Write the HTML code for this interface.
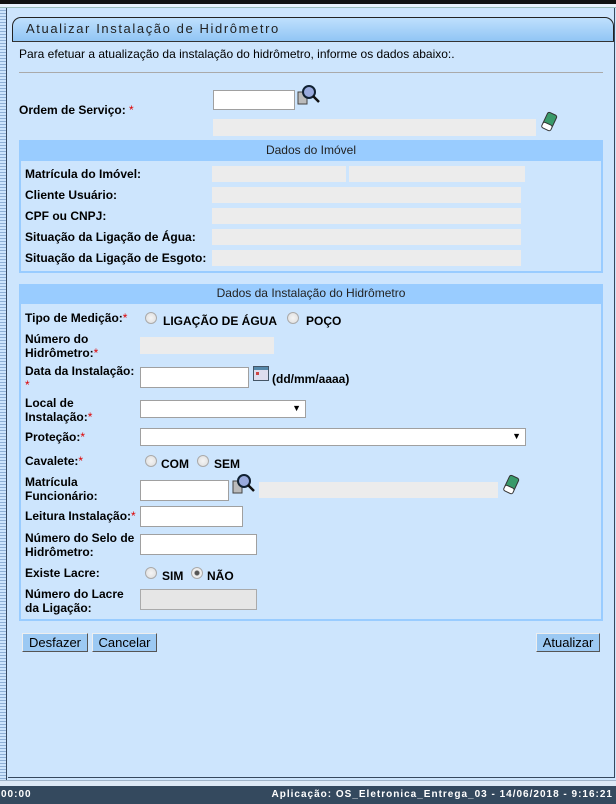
<!DOCTYPE html>
<html><head><meta charset="utf-8"><style>
*{margin:0;padding:0;box-sizing:border-box}
body{width:616px;height:804px;overflow:hidden;background:#cde5fd;font-family:"Liberation Sans",Arial,sans-serif;position:relative;font-size:12px;color:#000}
.a{position:absolute}
.lb{font-weight:bold;font-size:12px;line-height:14px}
.r{color:#d00;font-weight:normal}
.in{position:absolute;background:#fff;border:1px solid #a0a0a0}
.ro{position:absolute;background:#ececec}
.rad{position:absolute;width:12px;height:12px;border-radius:50%;border:1px solid #aaa;background:radial-gradient(circle,#f4f4f4,#ddd)}
.btn{position:absolute;height:19px;background:#9cc9f3;border:1px solid #555;border-top-color:#eee;border-left-color:#eee;font-size:13px;line-height:17px;text-align:center}
.sel{position:absolute;background:#fff;border:1px solid #a0a0a0;height:18px}
.sel:after{content:"▼";position:absolute;right:4px;top:2px;font-size:9px}
.hdr{position:absolute;background:#99ccff;text-align:center;font-size:12px;line-height:19px;color:#222}
</style></head><body>
<div class="a" style="left:0;top:0;width:616px;height:4px;background:#111"></div>
<div class="a" style="left:0;top:4px;width:616px;height:3px;background:#e8f2fc"></div>
<div class="a" style="left:0;top:7px;width:616px;height:1px;background:#9bb"></div>
<div class="a" style="left:0;top:8px;width:7px;height:772px;background:repeating-linear-gradient(#cde5fd 0 2px,#8fb0d6 2px 3px);border-right:1px solid #36485e"></div>
<div class="a" style="left:8px;top:8px;width:607px;height:770px;border-right:1px solid #36485e;border-bottom:1px solid #36485e"></div>
<div class="a" style="left:12px;top:17px;width:602px;height:25px;background:linear-gradient(#bfe0fd,#8fc4f4);border:1px solid #222;border-bottom:none;border-radius:9px 9px 0 0"></div>
<div class="a" style="left:12px;top:41px;width:602px;height:1px;background:#333"></div>
<div class="a" style="left:26px;top:21px;font-size:13px;letter-spacing:1.6px;color:#222">Atualizar Instalação de Hidrômetro</div>
<div class="a" style="left:19px;top:47px;font-size:12px">Para efetuar a atualização da instalação do hidrômetro, informe os dados abaixo:.</div>
<div class="a" style="left:19px;top:72px;width:584px;height:1px;background:#aaa"></div>
<div class="a lb" style="left:19px;top:103px;font-weight:bold;font-size:12px">Ordem de Serviço: <span class="r">*</span></div>
<div class="in" style="left:213px;top:90px;width:82px;height:20px"></div>
<svg class="a" style="left:296px;top:84px" width="26" height="24"><rect x="2" y="8" width="9" height="12" fill="#bbb" stroke="#444"/><circle cx="13" cy="8" r="6" fill="#9ad" stroke="#123" stroke-width="2"/><line x1="17" y1="12" x2="23" y2="18" stroke="#111" stroke-width="2.5"/></svg>
<div class="ro" style="left:213px;top:119px;width:323px;height:17px"></div>
<svg class="a" style="left:540px;top:111px" width="18" height="22"><g transform="rotate(25 9 11)"><rect x="4" y="2" width="10" height="14" rx="2" fill="#3a9a6a" stroke="#333"/><rect x="4" y="13" width="10" height="6" rx="2" fill="#fff" stroke="#333"/></g></svg>

<div class="a" style="left:19px;top:140px;width:584px;height:133px;background:#99ccff"></div>
<div class="hdr" style="left:19px;top:141px;width:584px">Dados do Imóvel</div>
<div class="a" style="left:21px;top:161px;width:580px;height:110px;background:#cde5fd"></div>
<div class="a lb" style="left:25px;top:167px">Matrícula do Imóvel:</div>
<div class="ro" style="left:212px;top:166px;width:134px;height:16px"></div>
<div class="ro" style="left:349px;top:166px;width:176px;height:16px"></div>
<div class="a lb" style="left:25px;top:188px">Cliente Usuário:</div>
<div class="ro" style="left:212px;top:187px;width:309px;height:16px"></div>
<div class="a lb" style="left:25px;top:209px">CPF ou CNPJ:</div>
<div class="ro" style="left:212px;top:208px;width:309px;height:16px"></div>
<div class="a lb" style="left:25px;top:230px">Situação da Ligação de Água:</div>
<div class="ro" style="left:212px;top:229px;width:309px;height:16px"></div>
<div class="a lb" style="left:25px;top:251px">Situação da Ligação de Esgoto:</div>
<div class="ro" style="left:212px;top:250px;width:309px;height:16px"></div>

<div class="a" style="left:19px;top:284px;width:584px;height:337px;background:#99ccff"></div>
<div class="hdr" style="left:19px;top:284px;width:584px">Dados da Instalação do Hidrômetro</div>
<div class="a" style="left:21px;top:304px;width:580px;height:315px;background:#cde5fd"></div>
<div class="a lb" style="left:25px;top:311px">Tipo de Medição:<span class="r">*</span></div>
<div class="rad" style="left:145px;top:312px"></div>
<div class="a lb" style="left:163px;top:314px;font-size:12px">LIGAÇÃO DE ÁGUA</div>
<div class="rad" style="left:287px;top:312px"></div>
<div class="a lb" style="left:306px;top:314px;font-size:12px">POÇO</div>
<div class="a lb" style="left:25px;top:332px">Número do<br>Hidrômetro:<span class="r">*</span></div>
<div class="ro" style="left:140px;top:337px;width:134px;height:17px"></div>
<div class="a lb" style="left:25px;top:364px">Data da Instalação:<br><span class="r">*</span></div>
<div class="in" style="left:140px;top:367px;width:109px;height:21px"></div>
<svg class="a" style="left:253px;top:366px" width="16" height="15"><rect x="0.5" y="0.5" width="15" height="14" fill="#dde" stroke="#456"/><rect x="1" y="1" width="14" height="3" fill="#58a"/><rect x="3" y="6" width="3" height="3" fill="#c44"/></svg>
<div class="a lb" style="left:272px;top:372px">(dd/mm/aaaa)</div>
<div class="a lb" style="left:25px;top:396px">Local de<br>Instalação:<span class="r">*</span></div>
<div class="sel" style="left:140px;top:400px;width:166px"></div>
<div class="a lb" style="left:25px;top:430px">Proteção:<span class="r">*</span></div>
<div class="sel" style="left:140px;top:428px;width:386px"></div>
<div class="a lb" style="left:25px;top:454px">Cavalete:<span class="r">*</span></div>
<div class="rad" style="left:145px;top:455px"></div>
<div class="a lb" style="left:161px;top:457px">COM</div>
<div class="rad" style="left:197px;top:455px"></div>
<div class="a lb" style="left:214px;top:457px">SEM</div>
<div class="a lb" style="left:25px;top:475px">Matrícula<br>Funcionário:</div>
<div class="in" style="left:140px;top:480px;width:89px;height:21px"></div>
<svg class="a" style="left:231px;top:473px" width="26" height="24"><rect x="2" y="8" width="9" height="12" fill="#bbb" stroke="#444"/><circle cx="13" cy="8" r="6" fill="#9ad" stroke="#123" stroke-width="2"/><line x1="17" y1="12" x2="23" y2="18" stroke="#111" stroke-width="2.5"/></svg>
<div class="ro" style="left:259px;top:482px;width:239px;height:16px"></div>
<svg class="a" style="left:502px;top:474px" width="18" height="22"><g transform="rotate(25 9 11)"><rect x="4" y="2" width="10" height="14" rx="2" fill="#3a9a6a" stroke="#333"/><rect x="4" y="13" width="10" height="6" rx="2" fill="#fff" stroke="#333"/></g></svg>
<div class="a lb" style="left:25px;top:509px">Leitura Instalação:<span class="r">*</span></div>
<div class="in" style="left:140px;top:506px;width:103px;height:21px"></div>
<div class="a lb" style="left:25px;top:531px">Número do Selo de<br>Hidrômetro:</div>
<div class="in" style="left:140px;top:534px;width:117px;height:21px"></div>
<div class="a lb" style="left:25px;top:566px">Existe Lacre:</div>
<div class="rad" style="left:145px;top:567px"></div>
<div class="a lb" style="left:162px;top:569px">SIM</div>
<div class="rad" style="left:191px;top:567px;background:radial-gradient(circle,#555 0 2px,#eee 3px)"></div>
<div class="a lb" style="left:207px;top:569px">NÃO</div>
<div class="a lb" style="left:25px;top:587px">Número do Lacre<br>da Ligação:</div>
<div class="a" style="left:140px;top:589px;width:117px;height:21px;background:#e6e6e6;border:1px solid #aaa"></div>

<div class="btn" style="left:22px;top:633px;width:66px">Desfazer</div>
<div class="btn" style="left:92px;top:633px;width:65px">Cancelar</div>
<div class="btn" style="left:536px;top:633px;width:64px">Atualizar</div>

<div class="a" style="left:0;top:780px;width:616px;height:6px;background:#dde9f5;border-top:1px solid #a0b4c8"></div>
<div class="a" style="left:0;top:786px;width:616px;height:18px;background:#34495e;color:#fff;font-weight:bold;font-size:10px;letter-spacing:1px;line-height:18px">
<span style="position:absolute;left:1px">00:00</span>
<span style="position:absolute;right:3px">Aplicação: OS_Eletronica_Entrega_03 - 14/06/2018 - 9:16:21</span></div>
</body></html>
